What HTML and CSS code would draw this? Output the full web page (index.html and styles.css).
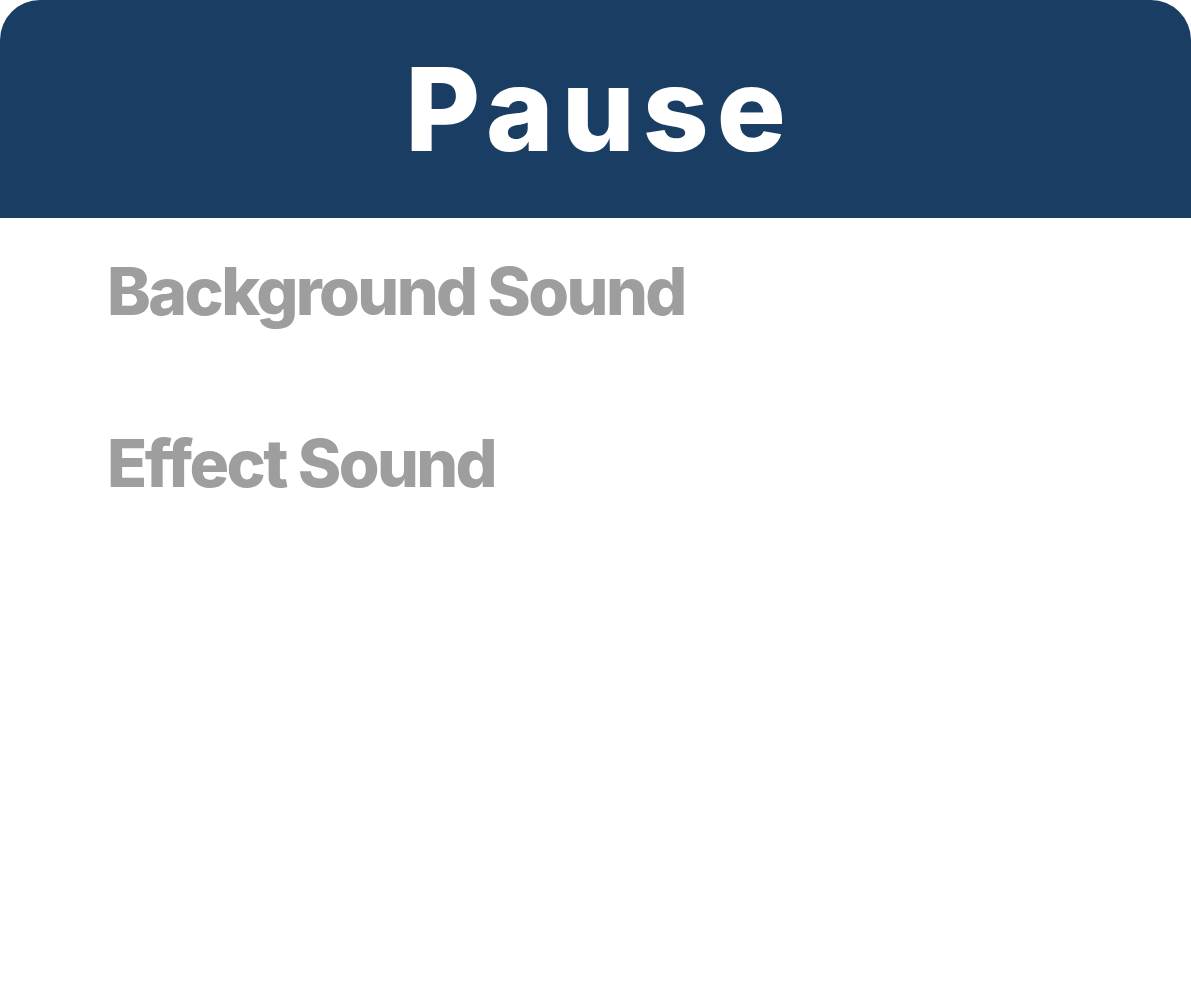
FILE: index.html
```html
<!DOCTYPE html>
<html lang="en">
<head>
<meta charset="utf-8">
<title>Pause</title>
<link rel="stylesheet" href="styles.css">
</head>
<body>
<div class="panel">
  <header class="panel-header">
    <h1 class="panel-title">Pause</h1>
  </header>
  <section class="settings">
    <div class="setting">
      <h2 class="setting-label">Background Sound</h2>
    </div>
    <div class="setting">
      <h2 class="setting-label">Effect Sound</h2>
    </div>
  </section>
</div>
</body>
</html>
```
FILE: styles.css
```css
html, body {
  margin: 0;
  padding: 0;
  background: #ffffff;
}

body {
  font-family: Inter, "Noto Sans", sans-serif;
  width: 1191px;
  height: 1000px;
  overflow: hidden;
}

.panel {
  display: flex;
  flex-direction: column;
}

.panel-header {
  height: 218px;
  background: #1a3e63;
  border-radius: 40px 40px 0 0;
  display: flex;
  align-items: center;
  justify-content: center;
}

.panel-title {
  margin: 0 0 0 8px;
  color: #ffffff;
  font-size: 115px;
  font-weight: 800;
  line-height: 1;
  letter-spacing: 8px;
}

.settings {
  display: flex;
  flex-direction: column;
  padding: 37px 0 0 107px;
  gap: 100px;
}

.setting-label {
  margin: 0;
  color: #9e9e9e;
  font-size: 66px;
  font-weight: 800;
  line-height: 72px;
  letter-spacing: -2.6px;
}
```
